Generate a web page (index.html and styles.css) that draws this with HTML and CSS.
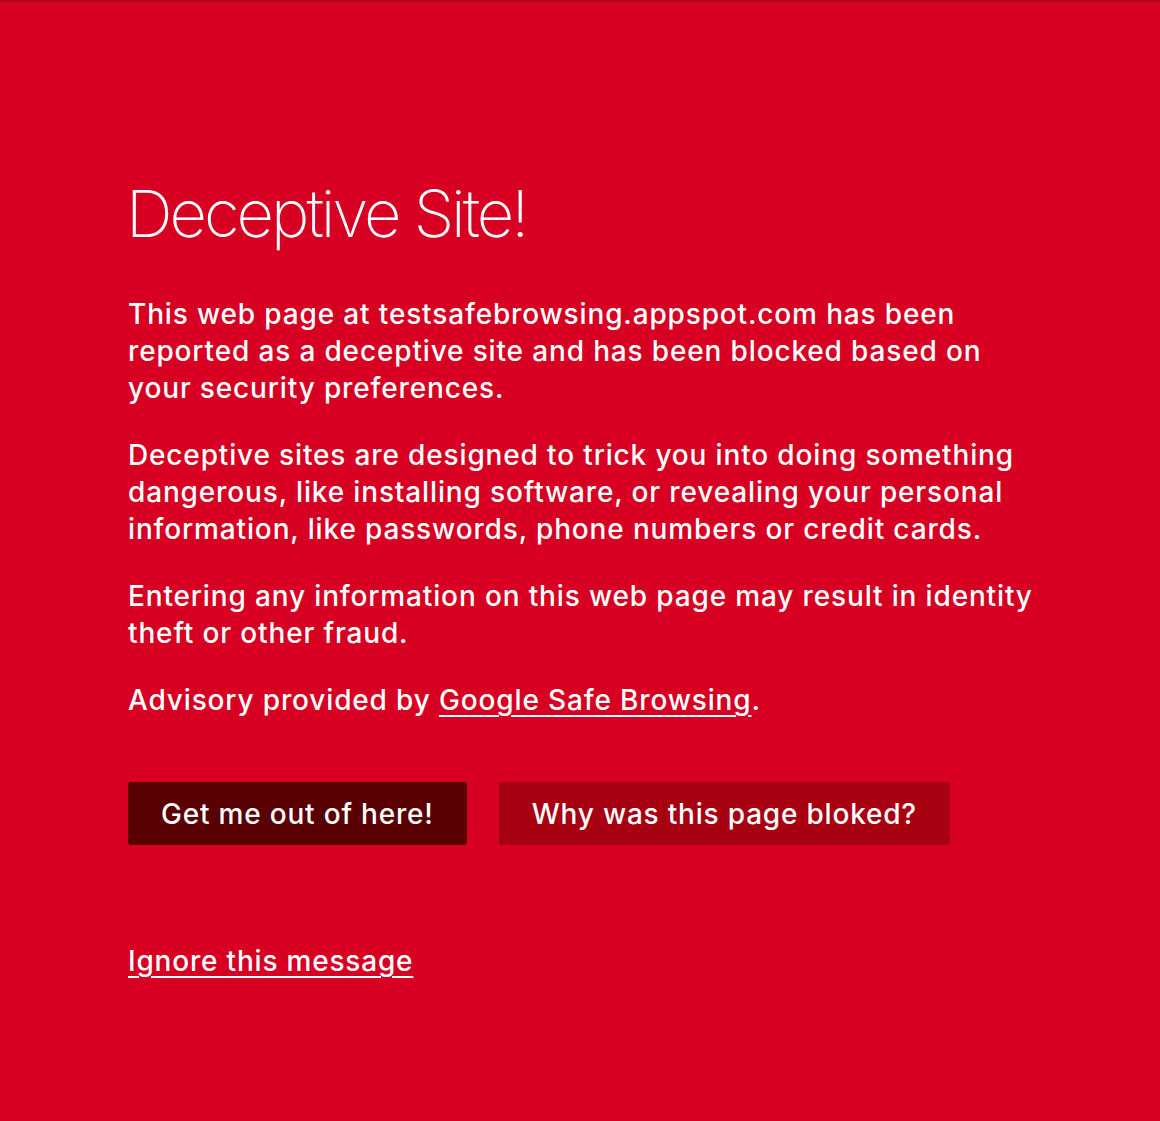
FILE: index.html
```html
<!DOCTYPE html>
<html lang="en">
<head>
<meta charset="utf-8">
<title>Deceptive Site!</title>
<link rel="stylesheet" href="styles.css">
</head>
<body>
<main class="page">
  <h1 class="title">Deceptive Site!</h1>
  <p class="text">This web page at testsafebrowsing.appspot.com has been reported as a deceptive site and has been blocked based on your security preferences.</p>
  <p class="text">Deceptive sites are designed to trick you into doing something dangerous, like installing software, or revealing your personal information, like passwords, phone numbers or credit cards.</p>
  <p class="text">Entering any information on this web page may result in identity theft or other fraud.</p>
  <p class="text">Advisory provided by <a class="link" href="#">Google Safe Browsing</a>.</p>
  <div class="actions">
    <button class="btn btn-dark" type="button">Get me out of here!</button>
    <button class="btn btn-mid" type="button">Why was this page bloked?</button>
  </div>
  <a class="link ignore" href="#">Ignore this message</a>
</main>
</body>
</html>
```
FILE: styles.css
```css
html, body {
  margin: 0;
  padding: 0;
  height: 100%;
}
body {
  background: #d70022;
  border-top: 2px solid #b0001c;
  box-sizing: border-box;
  color: #fff;
  font-family: Inter, "Noto Sans", sans-serif;
}
.page {
  padding: 172px 0 0 128px;
  width: 910px;
  display: flex;
  flex-direction: column;
  align-items: flex-start;
}
.title {
  margin: 0 0 42px;
  font-size: 65px;
  font-weight: 200;
  line-height: 80px;
  letter-spacing: -3px;
  margin-left: -2px;
}
.text {
  margin: 0 0 30px;
  font-size: 28px;
  line-height: 37px;
  font-weight: 500;
  letter-spacing: 0.85px;
}
.link {
  color: #fff;
  text-decoration: underline;
  text-decoration-thickness: 2px;
  text-underline-offset: 5px;
}
.actions {
  display: flex;
  gap: 32px;
  margin-top: 33px;
}
.btn {
  height: 63px;
  border: none;
  border-radius: 3px;
  color: #fff;
  font-family: Inter, "Noto Sans", sans-serif;
  font-size: 28px;
  font-weight: 500;
  letter-spacing: 0.8px;
  padding: 0 33px;
}
.btn-dark { background: #580002; }
.btn-mid { background: #a70011; }
.ignore {
  margin-top: 98px;
  font-size: 28px;
  font-weight: 500;
  letter-spacing: 0.8px;
  line-height: 37px;
}
```
